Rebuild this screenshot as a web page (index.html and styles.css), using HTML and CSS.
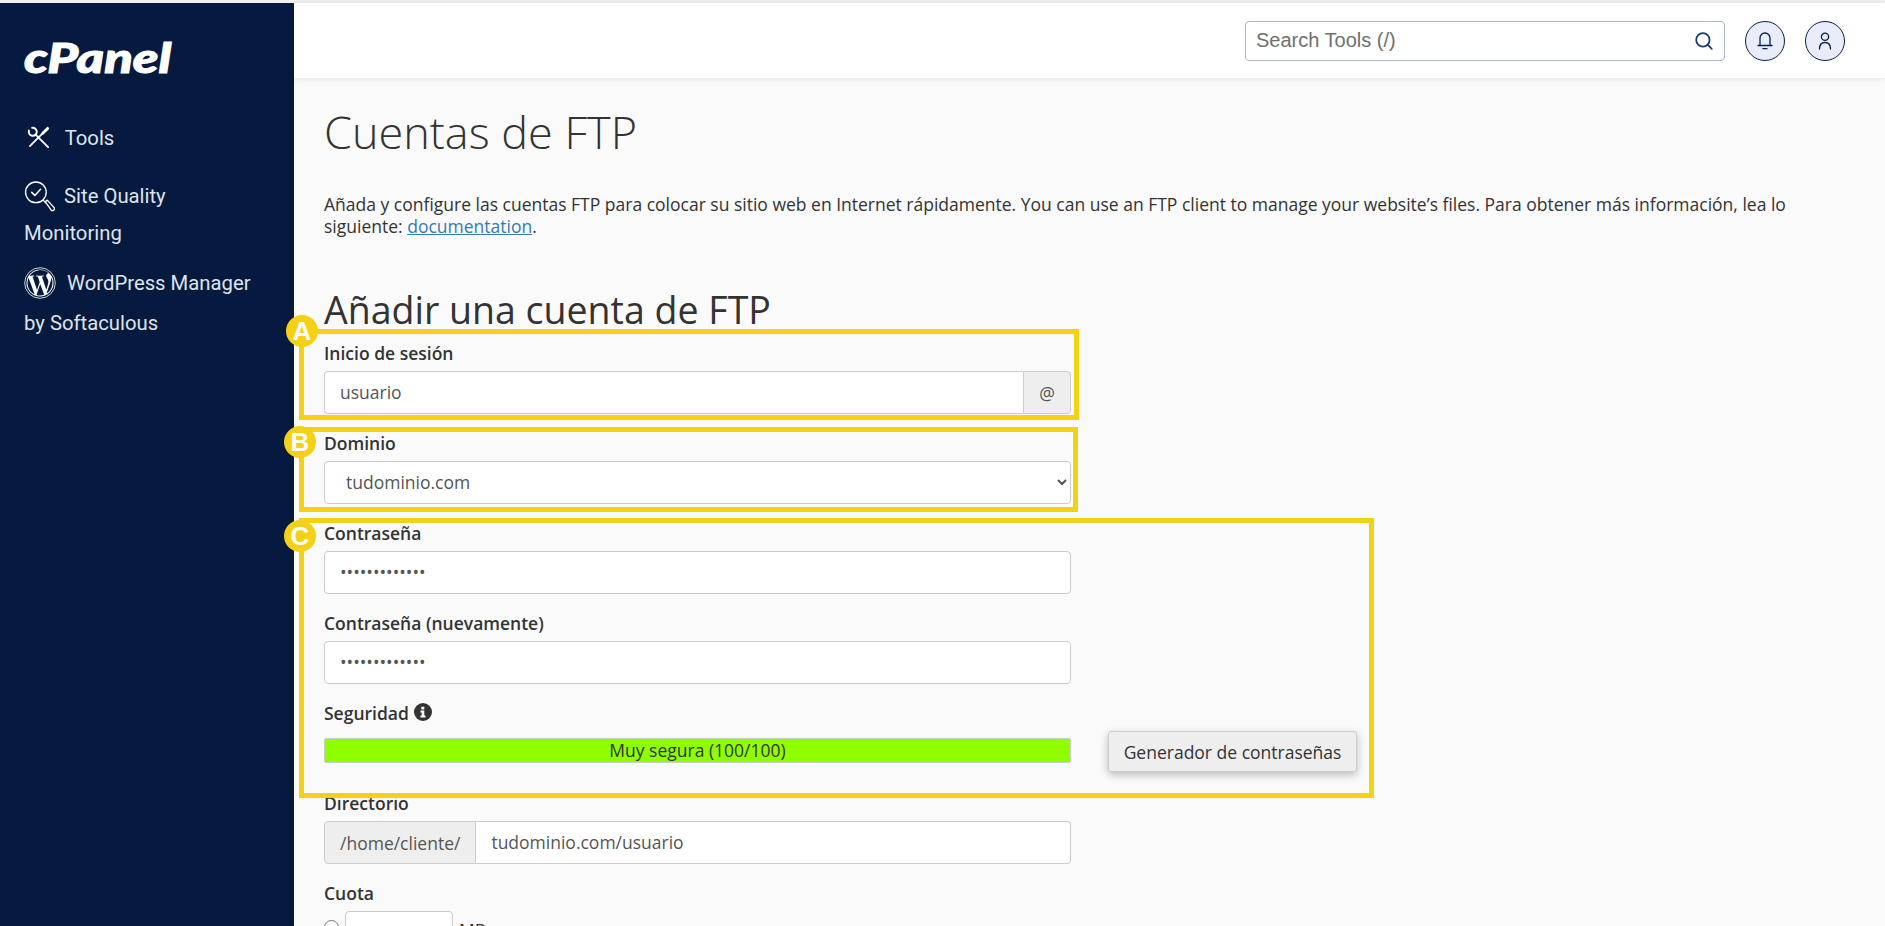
FILE: index.html
```html
<!DOCTYPE html>
<html lang="es">
<head>
<meta charset="utf-8">
<title>Cuentas de FTP</title>
<link rel="stylesheet" href="styles.css">
</head>
<body>
<div class="app">
  <aside class="sidebar">
    <div class="logo"><span class="logo-text">cPanel</span></div>
    <nav class="nav">
      <a class="nav-item nav-tools">
        <svg class="ico ico-tools" viewBox="0 0 24 24" fill="none" stroke="currentColor" stroke-linecap="round"><path d="M2 4.800A4.200 4.200 0 1 0 5.300 1.900" stroke-width="2"/><path d="M9 9l13 13" stroke-width="2"/><path d="M21.500 2.500 16.500 7.500" stroke-width="3"/><path d="M16 8 3 21" stroke-width="1.800"/></svg>
        <span>Tools</span>
      </a>
      <a class="nav-item nav-quality">
        <svg class="ico ico-quality" viewBox="0 0 30 30" fill="none" stroke="currentColor" stroke-width="1.300" stroke-linecap="round" stroke-linejoin="round"><circle cx="11.500" cy="11" r="10"/><path d="m7.500 11 3 3 5.500-6" stroke-width="1.500"/><path d="m18.500 18.500 2.500 2.500"/><path d="m20.500 20 2-1.500 6.500 7c.7.800.6 2-.2 2.700-.8.700-1.900.600-2.600-.2z"/></svg>
        <span>Site Quality Monitoring</span>
      </a>
      <a class="nav-item nav-wp">
        <svg class="ico ico-wp" viewBox="0 0 32 32"><circle cx="16" cy="16" r="15.300" fill="none" stroke="currentColor" stroke-width=".8"/><circle cx="16" cy="16" r="13.500" fill="currentColor"/><path fill="#061a3f" d="M3.500 16c0 5 2.900 9.300 7.100 11.300l-6-16.500c-.7 1.600-1.100 3.300-1.100 5.200zM24.500 15.300c0-1.600-.6-2.700-1-3.500-.7-1.100-1.300-2-1.300-3.100 0-1.200.9-2.400 2.200-2.400h.2A12.500 12.500 0 0 0 5.700 8.700h.8c1.300 0 3.300-.2 3.300-.2.700 0 .8.900.1 1 0 0-.7.100-1.400.1l4.500 13.300 2.700-8-1.900-5.300c-.7 0-1.300-.1-1.300-.1-.7 0-.6-1.100.1-1 0 0 2 .2 3.300.2s3.300-.2 3.300-.2c.7 0 .8.900.1 1 0 0-.7.100-1.400.1l4.400 13.200 1.200-4.100c.6-1.600.9-2.800.9-3.900zM16.200 17.100l-3.700 10.900a12.500 12.500 0 0 0 7.700-.2c0-.1-.1-.1-.1-.2zM27 10c.1.400.1.800.1 1.300 0 1.300-.2 2.700-.9 4.400l-3.800 10.900A12.500 12.500 0 0 0 27 10z"/></svg>
        <span>WordPress Manager by Softaculous</span>
      </a>
    </nav>
  </aside>

  <div class="main">
    <header class="topbar">
      <div class="search">
        <span class="search-text">Search Tools (/)</span>
        <svg class="search-ico" viewBox="0 0 18 18" fill="none" stroke="#1c3a72" stroke-width="1.600" stroke-linecap="round"><circle cx="8" cy="8" r="6"/><path d="m12.500 12.500 3.500 3.500"/></svg>
      </div>
      <button class="round-btn" aria-label="Notificaciones">
        <svg viewBox="0 0 16 18" fill="none" stroke="#0b1f4a" stroke-width="1.300" stroke-linecap="round" stroke-linejoin="round"><path d="M1 13.500h14"/><path d="M3 13.500V6a5 5 0 0 1 10 0v7.500"/><path d="M6 16.700h4"/></svg>
      </button>
      <button class="round-btn" aria-label="Usuario">
        <svg viewBox="0 0 16 18" fill="none" stroke="#0b1f4a" stroke-width="1.300" stroke-linecap="round"><circle cx="8" cy="4.800" r="3.600"/><path d="M2.500 17c0-4 2-6.500 5.500-6.500s5.500 2.500 5.500 6.500"/></svg>
      </button>
    </header>

    <main class="content">
      <h1 class="title">Cuentas de FTP</h1>
      <p class="intro">Añada y configure las cuentas FTP para colocar su sitio web en Internet rápidamente. You can use an FTP client to manage your website’s files. Para obtener más información, lea lo siguiente: <a class="link" href="#">documentation</a>.</p>
      <h2 class="subtitle">Añadir una cuenta de FTP</h2>

      <form class="form">
        <div class="group">
          <label class="label">Inicio de sesión</label>
          <div class="input-group">
            <input class="field field-join-r" type="text" value="usuario">
            <span class="addon addon-r">@</span>
          </div>
        </div>
        <div class="group">
          <label class="label">Dominio</label>
          <select class="field select"><option>tudominio.com</option></select>
        </div>
        <div class="group">
          <label class="label">Contraseña</label>
          <input class="field" type="password" value="1234567890123">
        </div>
        <div class="group">
          <label class="label">Contraseña (nuevamente)</label>
          <input class="field" type="password" value="1234567890123">
        </div>
        <div class="group group-strength">
          <label class="label label-strength">Seguridad
            <svg class="info" viewBox="0 0 18 18"><circle cx="9" cy="9" r="9" fill="#333"/><path fill="#fff" d="M7.300 3.800h3v2.600h-3zM6.500 7.500h3.800v5h1.200v2h-5v-2h1.200v-3h-1.200z"/></svg>
          </label>
          <div class="strength-row">
            <div class="meter">Muy segura (100/100)</div>
            <button class="gen-btn" type="button">Generador de contraseñas</button>
          </div>
        </div>
        <div class="group">
          <label class="label">Directorio</label>
          <div class="input-group">
            <span class="addon addon-l">/home/cliente/</span>
            <input class="field field-join-l" type="text" value="tudominio.com/usuario">
          </div>
        </div>
        <div class="group">
          <label class="label">Cuota</label>
          <div class="quota">
            <input class="radio" type="radio" name="q">
            <input class="field quota-input" type="text">
            <span class="quota-unit">MB</span>
          </div>
        </div>
      </form>
    </main>
  </div>
</div>

<div class="mark mark-a"><span class="badge">A</span></div>
<div class="mark mark-b"><span class="badge">B</span></div>
<div class="mark mark-c"><span class="badge">C</span></div>
</body>
</html>
```
FILE: styles.css
```css
* { box-sizing: border-box; }
html, body { margin: 0; height: 926px; overflow: hidden; }
body {
  background: #f0f0f0;
  padding-top: 3px;
  font-family: "Open Sans", sans-serif;
  font-size: 17.5px;
  color: #333;
}
.app { display: flex; height: 923px; }

.sidebar {
  width: 294px;
  flex: none;
  background: #061a3f;
  color: #dfe3ea;
  padding: 35px 35px 0 24px;
  font-family: Roboto, sans-serif;
  font-size: 20.3px;
}
.logo { height: 40px; }
.logo-text {
  display: inline-block;
  font-family: Lato, sans-serif;
  font-weight: 900;
  font-style: italic;
  font-size: 41px;
  line-height: 40px;
  color: #fff;
  transform: scaleX(1.28);
  transform-origin: left center;
  -webkit-text-stroke: 1px #fff;
}
.nav { margin-top: 42px; }
.nav-item { display: block; color: #dfe3ea; }
.ico { display: inline-block; vertical-align: middle; color: #fff; }
.nav-tools { line-height: 37px; }
.ico-tools { width: 23px; height: 23px; margin-right: 10px; margin-left: 3px; position: relative; top: -2px; }
.nav-quality { line-height: 37px; margin-top: 21px; }
.ico-quality { width: 31px; height: 31px; margin-right: 4px; position: relative; top: -1px; }
.nav-wp { line-height: 40px; margin-top: 11px; }
.ico-wp { width: 32px; height: 32px; margin-right: 6px; position: relative; top: -2px; }

.main { flex: 1; min-width: 0; background: #fafafa; display: flex; flex-direction: column; }
.topbar {
  height: 75px;
  flex: none;
  background: #fff;
  box-shadow: 0 1px 6px rgba(0,0,0,.1);
  display: flex;
  align-items: flex-start;
  padding: 18px 40px 0 0;
  justify-content: flex-end;
  gap: 20px;
}
.search {
  width: 480px;
  height: 40px;
  border: 1px solid #a9b5cb;
  border-radius: 4px;
  display: flex;
  align-items: center;
  justify-content: space-between;
  padding: 0 10px 2px 10px;
  font-family: "Liberation Sans", sans-serif;
  font-size: 20px;
  color: #6f6f6f;
}
.search-ico { width: 20px; height: 20px; margin-top: 2px; }
.round-btn {
  width: 40px;
  height: 40px;
  padding: 0;
  border: 1px solid #0b1f4a;
  border-radius: 50%;
  background: #e8ecfb;
  display: flex;
  align-items: center;
  justify-content: center;
}
.round-btn svg { width: 16px; height: 18px; }

.content { padding: 32px 30px 0; position: relative; }
.title {
  margin: 0;
  font-size: 45px;
  font-weight: 300;
  line-height: 44px;
  color: #333;
}
.intro { margin: 39px 0 0; line-height: 22px; }
.link { color: #337ab7; text-decoration: underline; }
.subtitle {
  margin: 53px 0 0;
  font-size: 37.5px;
  font-weight: 400;
  line-height: 40px;
  color: #333;
}
.form { width: 747px; margin-top: 11px; }
.group { margin-bottom: 17px; }
.label { display: block; font-weight: 600; line-height: 24px; margin-bottom: 6px; color: #333; }
.field {
  display: block;
  width: 100%;
  height: 43px;
  padding: 5px 15px 7px;
  border: 1px solid #ccc;
  border-radius: 4px;
  background: #fff;
  font: 17.5px "Open Sans", sans-serif;
  color: #555;
  outline: none;
}
.select { padding-left: 17px; }
.input-group { display: flex; }
.input-group .field { flex: 1; min-width: 0; }
.field-join-r { border-radius: 4px 0 0 4px; border-right: 0; }
.field-join-l { border-radius: 0 4px 4px 0; border-left: 0; }
.addon {
  flex: none;
  display: flex;
  align-items: center;
  padding: 0 15px;
  background: #eee;
  border: 1px solid #ccc;
  color: #555;
}
.addon-r { width: 48px; justify-content: center; padding: 0; border-radius: 0 4px 4px 0; }
.addon-l { border-radius: 4px 0 0 4px; }

.group-strength { margin-bottom: 0; height: 90px; }
.label-strength { margin-bottom: 13px; }
.info { width: 18px; height: 18px; vertical-align: -1px; margin-left: 1px; }
.strength-row { position: relative; }
.meter {
  height: 25px;
  line-height: 22px;
  border: 1px solid #ccc;
  border-radius: 2px;
  background: #8fff00;
  text-align: center;
  margin-top: 2px;
}
.gen-btn {
  position: absolute;
  left: 784px;
  top: -7px;
  height: 41px;
  width: 249px;
  padding: 0;
  background: #eee;
  border: 1px solid #ccc;
  border-radius: 3px;
  box-shadow: 0 3px 8px rgba(0,0,0,.25);
  font: 17.5px "Open Sans", sans-serif;
  color: #333;
}
.quota { display: flex; align-items: flex-start; gap: 6px; }
.radio { margin: 9px 0 0; width: 15px; height: 15px; flex: none; }
.quota-input { width: 108px; }
.quota-unit { color: #333; line-height: 38px; }

.mark {
  position: absolute;
  left: 299px;
  border: 5px solid #f4d116;
  pointer-events: none;
}
.mark-a { top: 329px; width: 780px; height: 91px; }
.mark-b { top: 427px; width: 779px; height: 85px; }
.mark-c { top: 518px; width: 1075px; height: 280px; }
.badge {
  position: absolute;
  left: -18px;
  top: -19px;
  width: 32px;
  height: 32px;
  border-radius: 50%;
  background: #f4d116;
  color: #fff;
  font: 700 26px/32px "Liberation Sans", sans-serif;
  text-align: center;
}
.mark-b .badge { left: -20px; top: -6px; }
.mark-c .badge { left: -20px; top: -3px; }
```
